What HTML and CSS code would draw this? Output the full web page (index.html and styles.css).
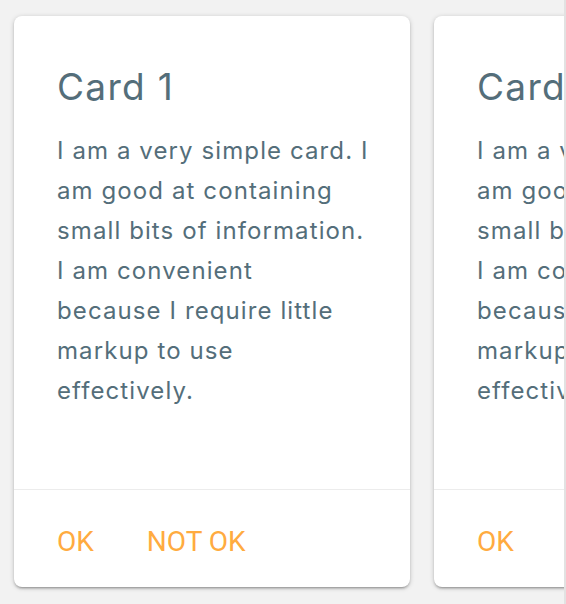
FILE: index.html
```html
<!DOCTYPE html>
<html lang="en">
<head>
<meta charset="utf-8">
<title>Cards</title>
<link rel="stylesheet" href="styles.css">
</head>
<body>
<div class="viewport">
  <div class="row">
    <div class="card">
      <div class="card-content">
        <h2 class="card-title">Card 1</h2>
        <p class="card-text">I am a very simple card. I am good at containing small bits of information. I am convenient because&nbsp;I require little markup to use effectively.</p>
      </div>
      <div class="card-action">
        <a class="action-link" href="#">OK</a>
        <a class="action-link" href="#">NOT OK</a>
      </div>
    </div>
    <div class="card">
      <div class="card-content">
        <h2 class="card-title">Card 2</h2>
        <p class="card-text">I am a very simple card. I am good at containing small bits of information. I am convenient because&nbsp;I require little markup to use effectively.</p>
      </div>
      <div class="card-action">
        <a class="action-link" href="#">OK</a>
        <a class="action-link" href="#">NOT OK</a>
      </div>
    </div>
  </div>
</div>
</body>
</html>
```
FILE: styles.css
```css
html {
  background: #e2e2e2;
}
body {
  margin: 0;
}
.viewport {
  width: 564px;
  height: 604px;
  overflow: hidden;
  background: #f2f2f2;
}
.row {
  display: flex;
  gap: 24px;
  padding: 16px 0 0 14px;
}
.card {
  flex: 0 0 396px;
  height: 571px;
  display: flex;
  flex-direction: column;
  background: #fff;
  border-radius: 8px;
  box-shadow: 0 2px 2px 0 rgba(0,0,0,.14), 0 3px 1px -2px rgba(0,0,0,.12), 0 1px 5px 0 rgba(0,0,0,.2);
  color: #546e7a;
  font-family: Inter, "Liberation Sans", sans-serif;
}
.card-content {
  flex: 1;
  padding: 47px 40px 0 43px;
}
.card-title {
  margin: 0 0 20px;
  font-size: 37px;
  line-height: 48px;
  font-weight: 400;
  letter-spacing: 1.3px;
}
.card-text {
  margin: 0;
  font-size: 24px;
  line-height: 40px;
  letter-spacing: 1.1px;
}
.card-action {
  border-top: 1px solid #ececec;
  padding: 37px 43px 30px;
  display: flex;
  gap: 53px;
}
.action-link {
  font-family: Roboto, "Liberation Sans", sans-serif;
  font-size: 28px;
  line-height: 30px;
  color: #ffab40;
  text-decoration: none;
}
```
